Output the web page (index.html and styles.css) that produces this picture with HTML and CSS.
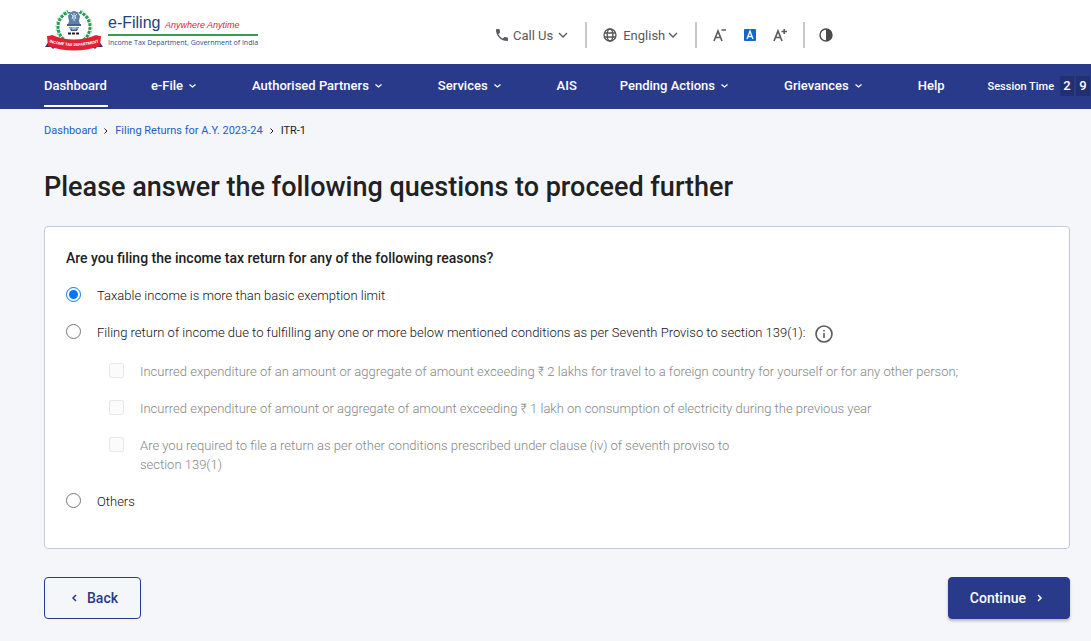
FILE: index.html
```
<!DOCTYPE html>
<html lang="en">
<head>
    <meta charset="UTF-8">
    <meta name="viewport" content="width=device-width, initial-scale=1.0">
    <link rel="stylesheet" href="styles.css">
    <title>e-Filing - Income Tax Department</title>
</head>
<body>
    <header class="topbar">
        <a class="logo" href="#">
            <svg class="emblem" viewBox="0 0 60 42" aria-hidden="true">
                <circle cx="30" cy="18" r="16" fill="none" stroke="#2f9a57" stroke-width="3" stroke-dasharray="3 1"/>
                <circle cx="30" cy="18" r="18" fill="none" stroke="#8cc9a0" stroke-width="1" stroke-dasharray="2 2"/>
                <path d="M24 0h12v3H24z" fill="#fff"/>
                <!-- lion capital -->
                <path d="M26 4q4-4 8 0l2 3-1 5 1 3H24l1-3-1-5z" fill="#5f7fa8"/>
                <path d="M27 5l2 2-1 3M33 5l-2 2 1 3M30 4v8" fill="none" stroke="#dce6f2" stroke-width="1"/>
                <path d="M23 15h14v2H23zM25 18h10l-2 4h-6z" fill="#41618f"/>
                <path d="M26 19h8M29 18v3M31 18v3" stroke="#c9d6e8" stroke-width="1"/>
                <path d="M24 24.500h12" stroke="#222" stroke-width="2" stroke-dasharray="3 1"/>
                <!-- ribbon -->
                <path d="M7 29L1 38l6 0 2 2 5-5zM53 29l6 9-6 0-2 2-5-5z" fill="#39336f"/>
                <path d="M3 27q3 0 5-1 22 9 44 0 2 1 5 1l-1 10q-26 9-52 0z" fill="#e31f35"/>
                <path id="ribbon" d="M4 33q26 8 52 0" fill="none"/>
                <text class="ribbon-text"><textPath href="#ribbon" startOffset="50%">INCOME TAX DEPARTMENT</textPath></text>
            </svg>
            <span class="logo-text">
                <span class="logo-title">e-Filing <em>Anywhere Anytime</em></span>
                <span class="logo-sub">Income Tax Department, Government of India</span>
            </span>
        </a>
        <div class="tools">
            <button class="tool call">
                <svg width="16" height="16" viewBox="0 0 24 24"><path fill="#5a5a66" d="M6.600 10.800c1.400 2.800 3.800 5.100 6.600 6.600l2.200-2.200c.3-.3.700-.4 1-.2 1.100.4 2.300.6 3.600.6.600 0 1 .4 1 1V20c0 .6-.4 1-1 1C10.600 21 3 13.400 3 4c0-.6.500-1 1-1h3.500c.6 0 1 .4 1 1 0 1.300.2 2.500.6 3.600.1.300 0 .7-.2 1z"/></svg>
                <span>Call Us</span>
                <svg class="chev" width="10" height="6" viewBox="0 0 10 6"><path d="M1 1l4 4 4-4"/></svg>
            </button>
            <button class="tool lang">
                <svg width="14" height="14" viewBox="0 0 14 14" fill="none" stroke="#555" stroke-width="1.300"><circle cx="7" cy="7" r="6"/><ellipse cx="7" cy="7" rx="2.800" ry="6"/><path d="M1.500 5h11M1.500 9h11"/></svg>
                <span>English</span>
                <svg class="chev" width="10" height="6" viewBox="0 0 10 6"><path d="M1 1l4 4 4-4"/></svg>
            </button>
            <div class="sizes">
                <button class="tool" aria-label="Decrease text size"><svg width="14" height="14" viewBox="0 0 14 14" fill="none" stroke="#5a5a5a" stroke-width="1.600"><path d="M1 13L5 3l4 10M2.500 9.500h5M8.500 2H13"/></svg></button>
                <button class="tool" aria-label="Normal text size"><svg width="12" height="12" viewBox="0 0 12 12" fill="none" stroke="#fff" stroke-width="1.300"><rect width="12" height="12" rx="1" fill="#1167cc" stroke="none"/><path d="M3 10l3-8 3 8M4 7.500h4"/></svg></button>
                <button class="tool" aria-label="Increase text size"><svg width="14" height="14" viewBox="0 0 14 14" fill="none" stroke="#5a5a5a" stroke-width="1.600"><path d="M1 13L5 3l4 10M2.500 9.500h5M8.500 3.500H14M11.200 1v5"/></svg></button>
            </div>
            <button class="tool contrast" aria-label="Contrast"><svg width="14" height="14" viewBox="0 0 14 14"><circle cx="7" cy="7" r="6" fill="none" stroke="#4a4a4a" stroke-width="1.400"/><path d="M7 1a6 6 0 0 1 0 12z" fill="#4a4a4a"/></svg></button>
        </div>
    </header>

    <nav class="navbar">
        <a class="nav-link active" href="#">Dashboard</a>
        <a class="nav-link menu" href="#">e-File <svg class="chev" width="7" height="4" viewBox="0 0 7 4"><path d="M.5.500l3 2.500 3-2.500"/></svg></a>
        <a class="nav-link menu" href="#">Authorised Partners <svg class="chev" width="7" height="4" viewBox="0 0 7 4"><path d="M.5.500l3 2.500 3-2.500"/></svg></a>
        <a class="nav-link menu" href="#">Services <svg class="chev" width="7" height="4" viewBox="0 0 7 4"><path d="M.5.500l3 2.500 3-2.500"/></svg></a>
        <a class="nav-link" href="#">AIS</a>
        <a class="nav-link menu" href="#">Pending Actions <svg class="chev" width="7" height="4" viewBox="0 0 7 4"><path d="M.5.500l3 2.500 3-2.500"/></svg></a>
        <a class="nav-link menu" href="#">Grievances <svg class="chev" width="7" height="4" viewBox="0 0 7 4"><path d="M.5.500l3 2.500 3-2.500"/></svg></a>
        <a class="nav-link" href="#">Help</a>
        <div class="session">Session Time <span class="digits"><b>2</b><b>9</b></span></div>
    </nav>

    <main class="page">
        <nav class="breadcrumb">
            <a href="#">Dashboard</a>
            <svg class="chev" width="4" height="6" viewBox="0 0 4 6"><path d="M.5.500L3 3 .5 5.500"/></svg>
            <a href="#">Filing Returns for A.Y. 2023-24</a>
            <svg class="chev" width="4" height="6" viewBox="0 0 4 6"><path d="M.5.500L3 3 .5 5.500"/></svg>
            <span>ITR-1</span>
        </nav>

        <h1>Please answer the following questions to proceed further</h1>

        <form class="card">
            <h2>Are you filing the income tax return for any of the following reasons?</h2>
            <div class="option">
                <input type="radio" name="reason" id="reason1" checked>
                <label for="reason1">Taxable income is more than basic exemption limit</label>
            </div>
            <div class="option">
                <input type="radio" name="reason" id="reason2">
                <label for="reason2">Filing return of income due to fulfilling any one or more below mentioned conditions as per Seventh Proviso to section 139(1):</label>
                <svg class="info" width="18" height="18" viewBox="0 0 18 18"><circle cx="9" cy="9" r="8" fill="none" stroke="#5a5a5a" stroke-width="1.600"/><path d="M9 8v5M9 5v1.600" stroke="#5a5a5a" stroke-width="1.600"/></svg>
            </div>
            <div class="conditions">
                <div class="option">
                    <input type="checkbox" id="cond1" disabled>
                    <label for="cond1">Incurred expenditure of an amount or aggregate of amount exceeding ₹ 2 lakhs for travel to a foreign country for yourself or for any other person;</label>
                </div>
                <div class="option">
                    <input type="checkbox" id="cond2" disabled>
                    <label for="cond2">Incurred expenditure of amount or aggregate of amount exceeding ₹ 1 lakh on consumption of electricity during the previous year</label>
                </div>
                <div class="option">
                    <input type="checkbox" id="cond3" disabled>
                    <label class="narrow" for="cond3">Are you required to file a return as per other conditions prescribed under clause (iv) of seventh proviso to section 139(1)</label>
                </div>
            </div>
            <div class="option">
                <input type="radio" name="reason" id="reason3">
                <label for="reason3">Others</label>
            </div>
        </form>

        <div class="actions">
            <button class="btn back"><svg class="chev" width="6" height="8" viewBox="0 0 6 8"><path d="M5 1L2 4l3 3"/></svg>Back</button>
            <button class="btn continue">Continue<svg class="chev" width="6" height="8" viewBox="0 0 6 8"><path d="M1 1l3 3-3 3"/></svg></button>
        </div>
    </main>
</body>
</html>
```
FILE: styles.css
```
* {
    box-sizing: border-box;
}

body {
    margin: 0;
    font-family: Roboto, sans-serif;
    font-size: 13px;
    line-height: 19px;
    color: #212121;
    background-color: #f5f6fa;
    overflow-x: hidden;
}

a {
    text-decoration: none;
}

button {
    font-family: inherit;
    cursor: pointer;
}

.chev {
    flex: none;
    fill: none;
    stroke: currentColor;
    stroke-width: 1.3;
}

/* top bar */
.topbar {
    display: flex;
    height: 64px;
    padding-left: 44px;
    background-color: #fff;
}

.logo {
    display: flex;
    width: 440px;
    padding-top: 9px;
    gap: 4px;
}

.emblem {
    width: 60px;
    height: 42px;
}

.ribbon-text {
    font: bold 4px Roboto, sans-serif;
    fill: #fff;
    text-anchor: middle;
}

.logo-text {
    display: flex;
    flex-direction: column;
    padding-top: 5px;
    white-space: nowrap;
}

.logo-title {
    min-width: 148px;
    font-family: "Liberation Sans", sans-serif;
    font-size: 16px;
    line-height: 18px;
    color: #1d4281;
    border-bottom: 2px solid #3c9a52;
}

.logo-title em {
    font-size: 9px;
    color: #e0203c;
}

.logo-sub {
    font-family: "Open Sans", sans-serif;
    font-size: 7px;
    line-height: 13px;
    color: #24508c;
}

.tools {
    display: flex;
    align-items: center;
    height: 26px;
    margin-top: 22px;
    margin-left: 10px;
}

.tool {
    display: flex;
    align-items: center;
    padding: 0;
    border: none;
    background: none;
    font-size: 13px;
    color: #5a5a5a;
}

.call {
    gap: 3px;
}

.call .chev {
    margin-left: 2px;
}

.call,
.lang,
.sizes {
    height: 26px;
    padding-right: 17px;
    margin-right: 16px;
    border-right: 2px solid #c8c8c8;
}

.lang {
    gap: 6px;
}

.lang .chev {
    margin-left: -3px;
}

.sizes {
    display: flex;
    gap: 17px;
    padding-right: 16px;
}

.contrast {
    margin-left: -2px;
}

/* navigation */
.navbar {
    display: flex;
    gap: 43px;
    height: 45px;
    padding-left: 44px;
    background-color: #293a8b;
    color: #fff;
    white-space: nowrap;
    overflow: hidden;
}

.nav-link {
    display: flex;
    flex: none;
    align-items: center;
    height: 43px;
    font-weight: 500;
    color: #fff;
}

.menu {
    gap: 6px;
    padding-right: 13px;
}

.active {
    padding-right: 1px;
    padding-top: 2px;
    border-bottom: 2px solid #fff;
}

.session {
    display: flex;
    flex: none;
    align-items: center;
    gap: 6px;
    height: 44px;
    font-size: 11px;
    font-weight: 500;
}

.digits {
    display: flex;
    gap: 2px;
}

.digits b {
    width: 14px;
    font-size: 13px;
    line-height: 20px;
    font-weight: 500;
    text-align: center;
    background-color: #222f70;
}

/* page content */
.page {
    padding: 12px 21px 22px 44px;
}

.breadcrumb {
    display: flex;
    align-items: center;
    gap: 7px;
    font-size: 11px;
}

.breadcrumb a {
    color: #1c60c4;
}

.breadcrumb .chev {
    stroke-width: 1;
}

h1 {
    margin: 31px 0 22px;
    font-size: 27px;
    line-height: 33px;
    font-weight: 500;
}

.card {
    display: flex;
    flex-direction: column;
    gap: 18px;
    padding: 21px 21px 37px;
    background-color: #fff;
    border: 1px solid #c5c8df;
    border-radius: 4px;
}

h2 {
    margin: 0;
    font-size: 14px;
    line-height: 20px;
    font-weight: 500;
}

.option {
    display: flex;
    align-items: flex-start;
    font-weight: 300;
    color: #111;
}

.option input {
    flex: none;
    width: 15px;
    height: 15px;
    margin: 1px 16px 0 0;
}

.info {
    flex: none;
    margin: 2px 0 0 9px;
}

.conditions {
    display: flex;
    flex-direction: column;
    gap: 18px;
    padding-top: 1px;
    padding-left: 43px;
}

.conditions .option {
    color: #858585;
}

.conditions input {
    opacity: 0.5;
}

.narrow {
    max-width: 600px;
}

.actions {
    display: flex;
    justify-content: space-between;
    margin-top: 28px;
}

.btn {
    display: flex;
    align-items: center;
    height: 42px;
    padding: 0 22px;
    font-size: 14px;
    font-weight: 500;
    border: 1px solid #293a8b;
    border-radius: 4px;
}

.btn .chev {
    stroke-width: 1.5;
}

.back {
    gap: 10px;
    padding-left: 26px;
    color: #293a8b;
    background-color: #f5f6fa;
}

.continue {
    gap: 11px;
    padding-left: 21px;
    padding-right: 26px;
    color: #fff;
    background-color: #293a8b;
    box-shadow: 0 2px 3px rgba(0, 0, 0, 0.25);
}
```
